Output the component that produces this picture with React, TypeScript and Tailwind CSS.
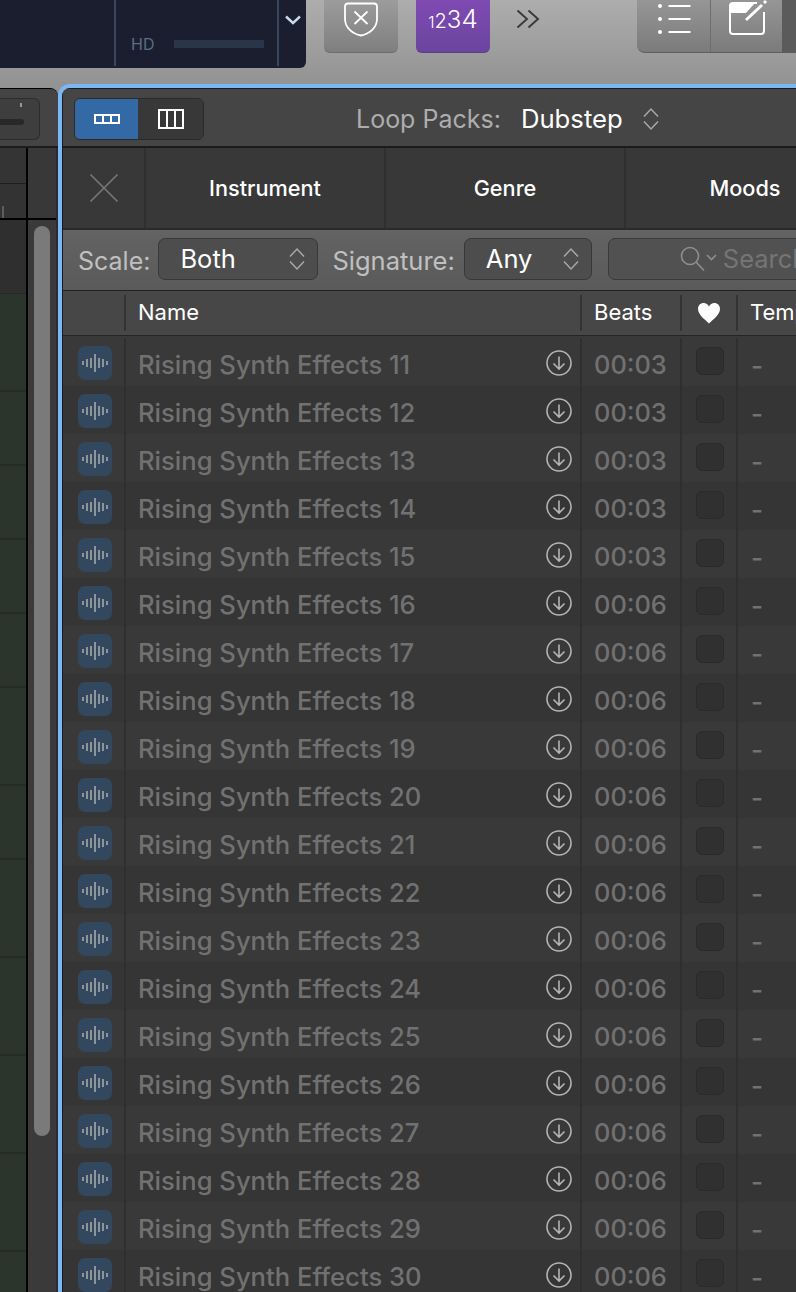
import React from 'react';

const font = "font-['Inter','Liberation_Sans',sans-serif]";

const rows = Array.from({ length: 20 }, (_, i) => ({
  name: `Rising Synth Effects ${i + 11}`,
  beats: i < 5 ? '00:03' : '00:06',
}));

// track lane heights on the left
const trackHeights = [98, 74, 74, 74, 74, 98, 74, 98, 98, 98, 98, 98];

const Stepper = ({ className = '' }: { className?: string }) => (
  <svg width="16" height="24" viewBox="0 0 16 24" fill="none" stroke="#a8a8a8" strokeWidth="1.5" className={className}>
    <path d="M1 9.5 L8 2 L15 9.5" />
    <path d="M1 14.5 L8 22 L15 14.5" />
  </svg>
);

const WaveIcon = () => (
  <div className="flex h-[34px] w-[34px] items-center justify-center rounded-[7px] bg-[#33475f]">
    <svg width="28" height="20" viewBox="0 0 28 20" fill="#8f9499">
      <rect x="1" y="8" width="2" height="4" />
      <rect x="5" y="6" width="2" height="8" />
      <rect x="9" y="5" width="2" height="10" />
      <rect x="13" y="1" width="2" height="18" />
      <rect x="17" y="5" width="2" height="10" />
      <rect x="21" y="6" width="2" height="8" />
      <rect x="25" y="8" width="2" height="4" />
    </svg>
  </div>
);

const DownloadIcon = () => (
  <svg width="26" height="26" viewBox="0 0 26 26" fill="none" stroke="#b4b4b4" strokeWidth="1.6" className="mt-[2px] shrink-0">
    <circle cx="13" cy="13" r="12" />
    <path d="M13 6.5 V19 M7.5 13.5 L13 19 L18.5 13.5" />
  </svg>
);

const Toolbar = () => (
  <div className="flex h-[84px] shrink-0 items-start bg-gradient-to-b from-[#adadad] to-[#939393]">
    {/* LCD display */}
    <div className="flex h-[68px] w-[306px] shrink-0 overflow-hidden rounded-br-md bg-[#1a1e2e]">
      <div className="w-[114px] shrink-0" />
      <div className="flex h-[66px] w-[165px] flex-col justify-between border-x-2 border-[#37475f] pl-[15px] pr-[13px]">
        <span className="-mt-[16px] text-[16px] leading-[20px] text-[#5a6c87]">CPU</span>
        <div className="mb-[13px] flex items-center justify-between">
          <span className="text-[16px] leading-[18px] text-[#5a6c87]">HD</span>
          <div className="h-2 w-[90px] bg-[#2b3549]" />
        </div>
      </div>
      <div className="flex flex-1 justify-center pt-[15px]">
        <svg width="16" height="10" viewBox="0 0 16 10" fill="none" stroke="#c9d9ec" strokeWidth="2.4">
          <path d="M1 1.5 L8 8 L15 1.5" />
        </svg>
      </div>
    </div>

    {/* Shield button */}
    <div className="ml-[18px] flex h-[53px] w-[74px] shrink-0 justify-center rounded-b-md border-b border-[#6d6d6d] bg-gradient-to-b from-[#9c9c9c] to-[#7f7f7f]">
      <svg width="36" height="36" viewBox="0 0 36 36" fill="none" stroke="#fff" strokeWidth="1.8" className="mt-[1px]">
        <path d="M5 2.5 H31 Q34 2.5 34 5.5 V18 C34 27 26 33 18 34.5 C10 33 2 27 2 18 V5.5 Q2 2.5 5 2.5 Z" />
        <path d="M11.5 10.5 L24.5 23 M24.5 10.5 L11.5 23" />
      </svg>
    </div>

    {/* Count-in button */}
    <div className="ml-[18px] flex h-[53px] w-[74px] shrink-0 items-baseline justify-center rounded-b-md border-b border-[#5c3f86] bg-gradient-to-b from-[#7f4ab2] to-[#6b459f] pt-[5px] font-light text-white">
      <span className="text-[16px] leading-[28px]">1</span>
      <span className="text-[20px] leading-[28px]">2</span>
      <span className="text-[24px] leading-[28px]">3</span>
      <span className="text-[26px] leading-[28px]">4</span>
    </div>

    <svg width="24" height="20" viewBox="0 0 24 20" fill="none" stroke="#383838" strokeWidth="1.9" className="ml-[26px] mt-[9px] shrink-0">
      <path d="M1.5 1.5 L11 10 L1.5 18.5 M12.5 1.5 L22 10 L12.5 18.5" />
    </svg>

    {/* List / notes buttons */}
    <div className="ml-[97px] flex h-[53px] w-[145px] shrink-0 overflow-hidden rounded-bl-lg border-b border-[#5f5f5f] bg-gradient-to-b from-[#969696] to-[#7b7b7b]">
      <div className="flex w-[74px] shrink-0 items-start border-r border-[#6e6e6e] pl-[21px] pt-[3px]">
        <svg width="34" height="32" viewBox="0 0 34 32" fill="#fff">
          <circle cx="2" cy="3" r="2" />
          <circle cx="2" cy="16" r="2" />
          <circle cx="2" cy="29" r="2" />
          <rect x="10.5" y="2" width="22" height="2" />
          <rect x="10.5" y="15" width="22" height="2" />
          <rect x="10.5" y="28" width="22" height="2" />
        </svg>
      </div>
      <div className="flex flex-1 items-start pl-[17px]">
        <svg width="40" height="36" viewBox="0 0 40 36" fill="none" stroke="#fff" strokeWidth="2">
          <path d="M36 12 V31 Q36 34 33 34 H5 Q2 34 2 31 V6 Q2 3 5 3 H29" />
          <path d="M2 6 Q2 3 5 3 H27 L18 13 H2 Z" fill="#fff" stroke="none" />
          <path d="M18 20 L34 5" strokeWidth="3" />
          <circle cx="37" cy="2" r="1.7" fill="#fff" stroke="none" />
        </svg>
      </div>
    </div>
    <div className="h-[53px] flex-1 bg-[#5b5b5b]" />
  </div>
);

const LeftPanel = () => (
  <div className="mt-[4px] flex w-[58px] shrink-0 flex-col overflow-hidden rounded-tr-lg border-t border-black bg-[#3a3a3a]">
    <div className="flex h-[59px] shrink-0 items-center border-b-2 border-[#1c1c1c] bg-[#444] pr-[18px] pt-[3px]">
      <div className="flex h-[42px] w-[40px] shrink-0 flex-col justify-between rounded-r-md border border-l-0 border-[#2c2c2c] bg-[#3e3e3e] py-[4px]">
        <div className="ml-auto mr-[17px] h-[4px] w-[2px] bg-[#9a9a9a]" />
        <div className="mb-[10px] h-[6px] w-[24px] rounded-r-full bg-[#282828]" />
      </div>
    </div>
    <div className="flex min-h-0 flex-1">
      <div className="flex w-[26px] shrink-0 flex-col">
        <div className="h-[36px] shrink-0 border-b border-[#1f1f1f] bg-[#343434]" />
        <div className="flex h-[34px] shrink-0 items-end bg-[#333]">
          <div className="ml-[2px] h-[12px] w-[2px] bg-[#5d5d5d]" />
        </div>
        <div className="h-[2px] shrink-0 bg-black" />
        <div className="h-[74px] shrink-0 border-b border-[#262626] bg-[#2f2f2f]" />
        <div className="flex-1 overflow-hidden">
          {trackHeights.map((h, i) => (
            <div key={i} className="border-b-2 border-[#252c26] bg-[#2b352c]" style={{ height: h }} />
          ))}
        </div>
      </div>
      <div className="w-[2px] shrink-0 bg-black" />
      <div className="flex flex-1 flex-col">
        <div className="h-[70px] shrink-0 bg-[#383838]" />
        <div className="h-[2px] shrink-0 bg-black" />
        <div className="flex-1 px-[6px] pt-[6px]">
          <div className="h-[910px] w-[16px] rounded-full bg-[#7a7a7a]" />
        </div>
      </div>
      <div className="w-[2px] shrink-0 bg-[#2c2c2c]" />
    </div>
  </div>
);

const Select = ({ value, className }: { value: string; className: string }) => (
  <div className={`flex h-[42px] items-center justify-between rounded-[7px] border border-[#383838] bg-[#4d4d4d] pl-[21px] pr-[12px] ${className}`}>
    <span className="text-[25.5px] leading-none text-white">{value}</span>
    <Stepper />
  </div>
);

const LoopBrowser = () => (
  <div className={`min-w-0 flex-1 overflow-hidden rounded-tl-xl border-l-4 border-t-4 border-[#7ab7f5] ${font}`}>
    <div className="flex h-full flex-col border-l border-t border-[#1b1b1b]">
      {/* View switch + loop pack */}
      <div className="flex h-[59px] shrink-0 items-center border-b-2 border-[#1c1c1c] bg-[#454545] pl-[11px] pt-[3px]">
        <div className="flex h-[42px] w-[130px] overflow-hidden rounded-md border border-[#2a2a2a]">
          <div className="flex w-[63px] items-center justify-center bg-[#336aa5]">
            <svg width="26" height="10" viewBox="0 0 26 10" fill="none" stroke="#fff" strokeWidth="2">
              <rect x="1" y="1" width="24" height="8" />
              <path d="M9 1 V9 M17 1 V9" />
            </svg>
          </div>
          <div className="flex flex-1 items-center justify-center bg-[#383838]">
            <svg width="26" height="20" viewBox="0 0 26 20" fill="none" stroke="#fff" strokeWidth="2">
              <rect x="1" y="1" width="24" height="18" />
              <path d="M9 1 V19 M17 1 V19" />
            </svg>
          </div>
        </div>
        <span className="ml-[152px] pt-[2px] text-[25px] text-[#adadad]">Loop Packs:</span>
        <span className="ml-[20px] text-[25.7px] text-white">Dubstep</span>
        <Stepper className="ml-[20px]" />
      </div>

      {/* Filter tabs */}
      <div className="flex h-[82px] shrink-0 border-b-2 border-[#2a2a2a] bg-[#383838]">
        <div className="flex w-[83px] shrink-0 items-center justify-center border-r-2 border-[#2f2f2f]">
          <svg width="30" height="30" viewBox="0 0 30 30" stroke="#777" strokeWidth="1.6">
            <path d="M1.5 1.5 L28.5 28.5 M28.5 1.5 L1.5 28.5" />
          </svg>
        </div>
        {['Instrument', 'Genre', 'Moods'].map((t) => (
          <div key={t} className="flex w-[240px] shrink-0 items-center justify-center border-r-2 border-[#2f2f2f] text-[21.7px] font-medium text-white">
            {t}
          </div>
        ))}
      </div>

      {/* Scale / signature / search */}
      <div className="flex h-[61px] shrink-0 items-center border-b border-[#222] bg-gradient-to-b from-[#636363] to-[#5a5a5a] pb-[2px] pl-[15px]">
        <span className="pt-[5px] text-[25px] text-[#c0c0c0]">Scale:</span>
        <Select value="Both" className="ml-[8px] w-[160px] shrink-0" />
        <span className="ml-[14px] pt-[5px] text-[25.5px] text-[#c0c0c0]">Signature:</span>
        <Select value="Any" className="ml-[9px] w-[128px] shrink-0" />
        <div className="ml-[16px] flex h-[42px] w-[300px] shrink-0 items-center rounded-[7px] border border-[#3a3a3a] bg-[#515151] pl-[71px]">
          <svg width="40" height="28" viewBox="0 0 40 28" fill="none" stroke="#8e8e8e" strokeWidth="1.6">
            <circle cx="10" cy="11" r="8.5" />
            <path d="M16 17 L24 25.5" />
            <path d="M27 10 L31.5 14.5 L36 10" />
          </svg>
          <span className="ml-[3px] text-[25.5px] text-[#757575]">Search</span>
        </div>
      </div>

      {/* Column headers */}
      <div className="flex h-[45px] shrink-0 items-center border-b border-[#252525] bg-[#474747] pb-[1px] text-[22px] text-white">
        <div className="h-[36px] w-[63px] shrink-0 border-r-2 border-[#333]" />
        <div className="flex h-[36px] w-[456px] shrink-0 items-center border-r-2 border-[#333] pl-[12px]">Name</div>
        <div className="flex h-[36px] w-[100px] shrink-0 items-center border-r-2 border-[#333] pl-[12px]">Beats</div>
        <div className="flex h-[36px] w-[56px] shrink-0 items-center justify-center border-r-2 border-[#333]">
          <svg width="24" height="22" viewBox="0 0 24 22" fill="#fff">
            <path d="M12 21.5 C8 17.5 1 13 1 6.8 C1 3.3 3.6 1 6.6 1 C9 1 11 2.4 12 4.5 C13 2.4 15 1 17.4 1 C20.4 1 23 3.3 23 6.8 C23 13 16 17.5 12 21.5 Z" />
          </svg>
        </div>
        <div className="pl-[12px]">Tempo</div>
      </div>

      {/* Loop rows */}
      <div className="min-h-0 flex-1 overflow-hidden bg-[#393939] pt-[2px]">
        {rows.map((r, i) => (
          <div key={r.name} className={`flex h-[48px] items-start ${i % 2 === 0 ? 'bg-[#393939]' : 'bg-[#353535]'}`}>
            <div className="flex h-full w-[63px] shrink-0 justify-end border-r-2 border-[#2f2f2f] pr-[12px] pt-[8px]">
              <WaveIcon />
            </div>
            <div className="flex h-full w-[456px] shrink-0 items-center justify-between border-r-2 border-[#2f2f2f] pl-[12px] pr-[8px]">
              <span className="pt-[6px] text-[25.6px] font-medium text-[#717171]">{r.name}</span>
              <DownloadIcon />
            </div>
            <div className="flex h-full w-[100px] shrink-0 items-center border-r-2 border-[#2f2f2f] pl-[12px] pt-[6px] text-[25.4px] font-medium text-[#717171]">
              {r.beats}
            </div>
            <div className="flex h-full w-[56px] shrink-0 justify-center border-r-2 border-[#2f2f2f] pl-[1px] pt-[9px]">
              <div className="h-[28px] w-[28px] rounded-[6px] border border-[#2a2a2a] bg-[#303030]" />
            </div>
            <div className="flex h-full items-center pl-[13px] pt-[6px] text-[26px] font-medium text-[#717171]">-</div>
          </div>
        ))}
      </div>
    </div>
  </div>
);

export default function App() {
  return (
    <div className={`flex h-[1292px] w-[796px] flex-col overflow-hidden bg-[#939393] ${font}`}>
      <Toolbar />
      <div className="flex min-h-0 flex-1">
        <LeftPanel />
        <LoopBrowser />
      </div>
    </div>
  );
}
